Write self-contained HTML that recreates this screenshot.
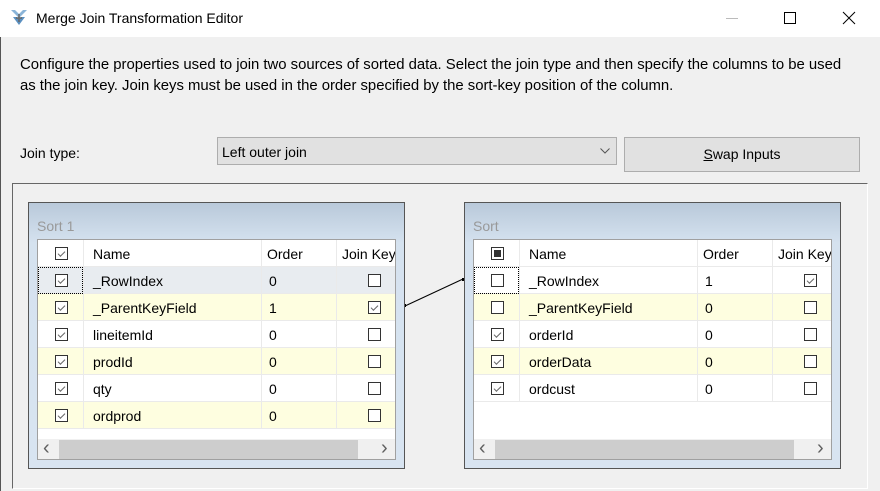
<!DOCTYPE html>
<html><head><style>
*{margin:0;padding:0;box-sizing:border-box}
body{width:880px;height:491px;background:#f0f0f0;font-family:"Liberation Sans",sans-serif;font-size:13px;color:#000;position:relative;overflow:hidden}
.a{position:absolute}
.t{white-space:nowrap}
.cb{position:absolute;width:13px;height:13px;border:1px solid #333;background:#fff}
.cb.c::after{content:"";position:absolute;left:2px;top:3px;width:6px;height:3px;border-left:1px solid #666;border-bottom:1px solid #666;transform:rotate(-45deg)}
.grid{position:absolute;width:377px;height:267px;border:1px solid #555;background:linear-gradient(#b9c9da,#d5e2ef 40px,#d8e4f1)}
.inner{position:absolute;left:8px;top:36px;width:359px;height:221px;border:1px solid #a0a0a0;background:#fff;overflow:hidden}
.row{position:absolute;left:0;width:359px;height:27px;border-bottom:1px solid #eaeaea}
.row .v{position:absolute;top:0;bottom:0;width:1px;background:#eaeaea}
.row span{position:absolute;top:6px;font-size:14px}
.sb span{position:absolute;top:-1px;color:#606060;font-size:20px;line-height:20px}
</style></head><body>
<div class="a" style="left:0;top:0;width:880px;height:37px;background:#fff"></div>
<svg class="a" style="left:9px;top:8px" width="20" height="20" viewBox="0 0 20 20"><path d="M2 2 L10 10 L18 2 L14 2 L10 6 L6 2Z" fill="#8ab4d8"/><path d="M4 9 L10 17 L16 9 L12 9 L10 12 L8 9Z" fill="#5a8fc0"/><path d="M10 6v8M7 10h6" stroke="#666" stroke-width="1.5"/></svg>
<div class="a t" style="left:36px;top:10px;font-size:14px">Merge Join Transformation Editor</div>
<div class="a" style="left:726px;top:18px;width:12px;height:1px;background:#bbb"></div>
<div class="a" style="left:784px;top:12px;width:12px;height:12px;border:1px solid #000"></div>
<svg class="a" style="left:842px;top:11px" width="14" height="14"><path d="M1 1L13 13M13 1L1 13" stroke="#000" stroke-width="1"/></svg>
<div class="a" style="left:0;top:37px;width:1px;height:454px;background:#555"></div>
<div class="a t" style="left:20px;top:55px;font-size:14.9px;line-height:21px;letter-spacing:-0.02px">Configure the properties used to join two sources of sorted data. Select the join type and then specify the columns to be used<br>as the join key. Join keys must be used in the order specified by the sort-key position of the column.</div>
<div class="a t" style="left:20px;top:145px;font-size:14px">Join type:</div>
<div class="a" style="left:217px;top:137px;width:400px;height:28px;border:1px solid #adadad;background:#e1e1e1"><span class="a t" style="left:4px;top:6px;font-size:14px">Left outer join</span>
<svg class="a" style="left:382px;top:10px" width="10" height="6"><path d="M0.5 0.5L5 5L9.5 0.5" stroke="#555" fill="none"/></svg></div>
<div class="a" style="left:624px;top:137px;width:236px;height:35px;border:1px solid #adadad;background:#e1e1e1;text-align:center;line-height:33px;font-size:14px"><u>S</u>wap Inputs</div>
<div class="a" style="left:12px;top:183px;width:856px;height:306px;border-left:1px solid #666;border-top:1px solid #666;border-right:1px solid #fff;border-bottom:1px solid #fff"></div>

<svg class="a" style="left:0;top:0" width="880" height="491"><line x1="405" y1="306" x2="463" y2="279" stroke="#000"/><rect x="403" y="304" width="3" height="3"/><rect x="462" y="278" width="3" height="3"/></svg>

<div class="grid" style="left:28px;top:202px">
<div class="a t" style="left:8px;top:15px;color:#999;font-size:14px">Sort 1</div>
<div class="inner">
<div class="row" style="top:0;height:27px"><div class="v" style="left:45px"></div><div class="v" style="left:223px"></div><div class="v" style="left:298px"></div><div class="cb c" style="left:17px;top:7px"></div><span style="left:55px">Name</span><span style="left:229px">Order</span><span style="left:304px">Join Key</span></div>
<div class="row" style="top:27px;background:#e8ecf0"><div class="v" style="left:45px"></div><div class="v" style="left:223px"></div><div class="v" style="left:298px"></div><div class="a" style="left:0;top:0;width:45px;height:27px;border:1px dotted #000"></div><div class="cb c" style="left:17px;top:7px"></div><span style="left:55px">_RowIndex</span><span style="left:231px">0</span><div class="cb" style="left:330px;top:7px"></div></div>
<div class="row" style="top:54px;background:#fefee0"><div class="v" style="left:45px"></div><div class="v" style="left:223px"></div><div class="v" style="left:298px"></div><div class="cb c" style="left:17px;top:7px"></div><span style="left:55px">_ParentKeyField</span><span style="left:231px">1</span><div class="cb c" style="left:330px;top:7px"></div></div>
<div class="row" style="top:81px"><div class="v" style="left:45px"></div><div class="v" style="left:223px"></div><div class="v" style="left:298px"></div><div class="cb c" style="left:17px;top:7px"></div><span style="left:55px">lineitemId</span><span style="left:231px">0</span><div class="cb" style="left:330px;top:7px"></div></div>
<div class="row" style="top:108px;background:#fefee0"><div class="v" style="left:45px"></div><div class="v" style="left:223px"></div><div class="v" style="left:298px"></div><div class="cb c" style="left:17px;top:7px"></div><span style="left:55px">prodId</span><span style="left:231px">0</span><div class="cb" style="left:330px;top:7px"></div></div>
<div class="row" style="top:135px"><div class="v" style="left:45px"></div><div class="v" style="left:223px"></div><div class="v" style="left:298px"></div><div class="cb c" style="left:17px;top:7px"></div><span style="left:55px">qty</span><span style="left:231px">0</span><div class="cb" style="left:330px;top:7px"></div></div>
<div class="row" style="top:162px;background:#fefee0"><div class="v" style="left:45px"></div><div class="v" style="left:223px"></div><div class="v" style="left:298px"></div><div class="cb c" style="left:17px;top:7px"></div><span style="left:55px">ordprod</span><span style="left:231px">0</span><div class="cb" style="left:330px;top:7px"></div></div>
<div class="a sb" style="left:0;top:199px;width:359px;height:21px;background:#f0f0f0"><div class="a" style="left:21px;top:1px;width:299px;height:19px;background:#cdcdcd"></div><span style="left:5px">&lsaquo;</span><span style="left:343px">&rsaquo;</span></div>
</div></div>

<div class="grid" style="left:464px;top:202px">
<div class="a t" style="left:8px;top:15px;color:#999;font-size:14px">Sort</div>
<div class="inner">
<div class="row" style="top:0"><div class="v" style="left:45px"></div><div class="v" style="left:223px"></div><div class="v" style="left:298px"></div><div class="cb" style="left:17px;top:7px"><div class="a" style="left:2px;top:2px;width:7px;height:7px;background:#333"></div></div><span style="left:55px">Name</span><span style="left:229px">Order</span><span style="left:304px">Join Key</span></div>
<div class="row" style="top:27px"><div class="v" style="left:45px"></div><div class="v" style="left:223px"></div><div class="v" style="left:298px"></div><div class="a" style="left:0;top:0;width:45px;height:27px;border:1px dotted #000"></div><div class="cb" style="left:17px;top:7px"></div><span style="left:55px">_RowIndex</span><span style="left:231px">1</span><div class="cb c" style="left:330px;top:7px"></div></div>
<div class="row" style="top:54px;background:#fefee0"><div class="v" style="left:45px"></div><div class="v" style="left:223px"></div><div class="v" style="left:298px"></div><div class="cb" style="left:17px;top:7px"></div><span style="left:55px">_ParentKeyField</span><span style="left:231px">0</span><div class="cb" style="left:330px;top:7px"></div></div>
<div class="row" style="top:81px"><div class="v" style="left:45px"></div><div class="v" style="left:223px"></div><div class="v" style="left:298px"></div><div class="cb c" style="left:17px;top:7px"></div><span style="left:55px">orderId</span><span style="left:231px">0</span><div class="cb" style="left:330px;top:7px"></div></div>
<div class="row" style="top:108px;background:#fefee0"><div class="v" style="left:45px"></div><div class="v" style="left:223px"></div><div class="v" style="left:298px"></div><div class="cb c" style="left:17px;top:7px"></div><span style="left:55px">orderData</span><span style="left:231px">0</span><div class="cb" style="left:330px;top:7px"></div></div>
<div class="row" style="top:135px"><div class="v" style="left:45px"></div><div class="v" style="left:223px"></div><div class="v" style="left:298px"></div><div class="cb c" style="left:17px;top:7px"></div><span style="left:55px">ordcust</span><span style="left:231px">0</span><div class="cb" style="left:330px;top:7px"></div></div>
<div class="a sb" style="left:0;top:199px;width:359px;height:21px;background:#f0f0f0"><div class="a" style="left:21px;top:1px;width:299px;height:19px;background:#cdcdcd"></div><span style="left:5px">&lsaquo;</span><span style="left:343px">&rsaquo;</span></div>
</div></div>
</body></html>
